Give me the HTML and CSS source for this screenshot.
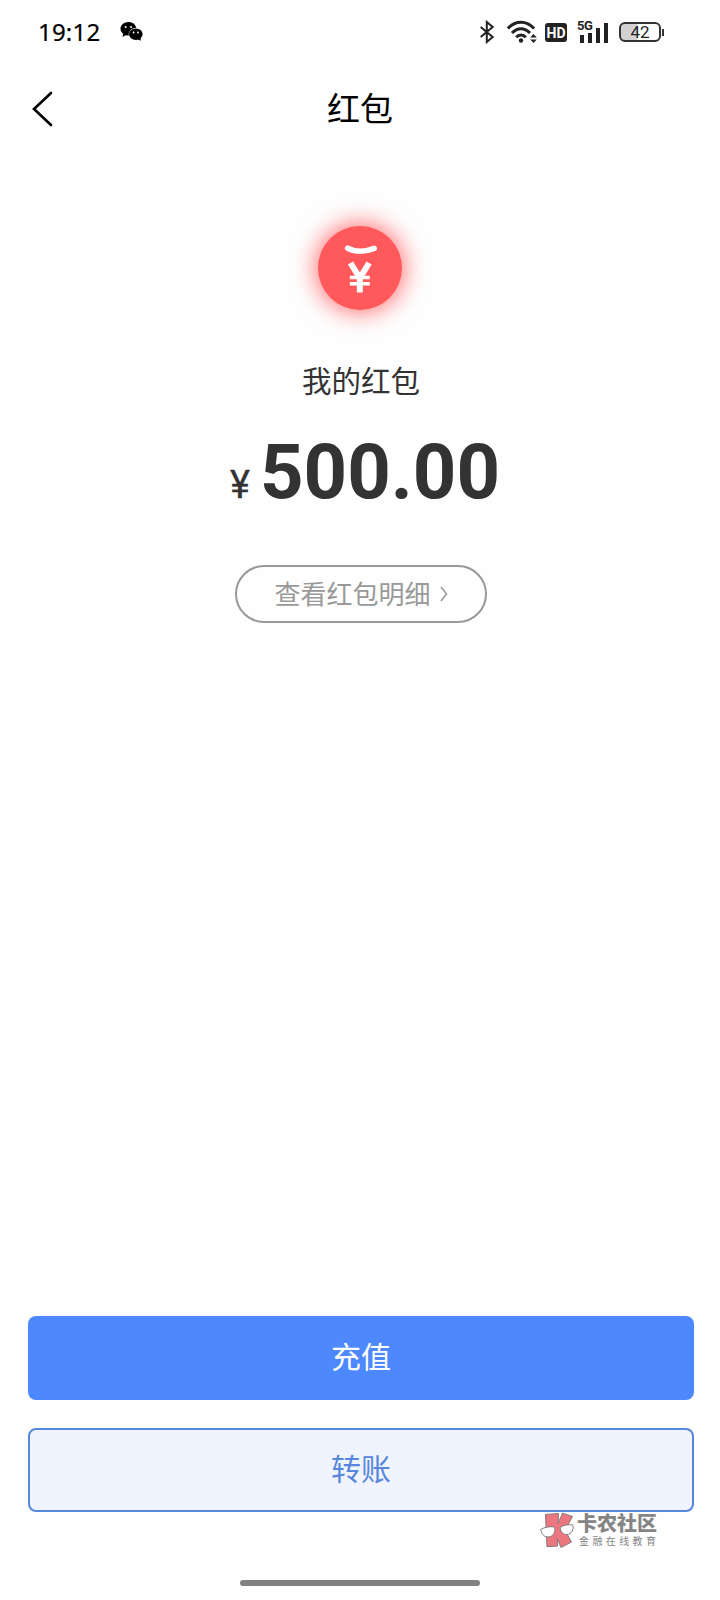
FILE: index.html
```
<!DOCTYPE html>
<html lang="zh-CN">
<head>
  <meta charset="UTF-8">
  <title>红包</title>
  <link rel="stylesheet" href="styles.css">
</head>
<body>

<div class="page">

  <!--状态栏-->
  <div class="status">
    <span class="time">19:12</span>
    <svg class="wechat" width="24" height="22" viewBox="0 0 24 22">
      <path d="M8.500 1C3.800 1 .5 4 .5 7.800c0 2.100 1 3.800 2.700 5L2.500 16l3.200-1.700 3 .4C8.300 10 11.500 7 16.300 6.800 15.500 3.300 12.500 1 8.500 1z"/>
      <ellipse cx="15.800" cy="13.200" rx="6.800" ry="5.800"/>
      <path d="M17 18l4 1.800-.8-3.500z"/>
      <g fill="#fff">
        <circle cx="5.700" cy="6" r="1"/><circle cx="11" cy="6" r="1"/>
        <circle cx="13.600" cy="11.500" r=".9"/><circle cx="18" cy="11.500" r=".9"/>
      </g>
    </svg>
    <div class="icons">
      <svg class="bluetooth" width="16" height="24" viewBox="0 0 16 24">
        <path d="M1.700 7l12 10-5.900 5V2l5.900 5-12 10" fill="none" stroke="#222" stroke-width="2"/>
      </svg>
      <svg class="wifi" width="31" height="24" viewBox="0 0 31 24">
        <g fill="none" stroke="#222" stroke-width="3">
          <path d="M.9 8.500C8.500.3 19.500.3 27.100 8.500"/>
          <path d="M5 13c5.300-5.800 12.700-5.800 18 0"/>
          <path d="M9.200 17.200c2.800-3.100 6.800-3.100 9.600 0"/>
        </g>
        <circle cx="14" cy="20.500" r="2.200"/>
        <path d="M23.200 17.500l3.300-3.500 3.300 3.500zM23.200 19.500h6.600L26.500 23z"/>
      </svg>
      <span class="hd">HD</span>
      <div class="signal">
        <span class="net">5G</span>
        <i class="bar b1"></i>
        <i class="bar b2"></i>
        <i class="bar b3"></i>
        <i class="bar b4"></i>
      </div>
      <div class="battery"><span>42</span></div>
      <i class="cap"></i>
    </div>
  </div>

  <!--标题栏-->
  <div class="nav">
    <a class="back" href="#">
      <svg width="22" height="36" viewBox="0 0 22 36">
        <path d="M19 2L2 18l17 16" fill="none" stroke="#000" stroke-width="2.600" stroke-linecap="round"/>
      </svg>
    </a>
    <h1>红包</h1>
  </div>

  <!--红包余额-->
  <div class="main">
    <div class="coin">
      <svg width="84" height="84" viewBox="0 0 84 84">
        <path d="M29.700 22.300q11.500 6 26.500 0" fill="none" stroke="#fff" stroke-width="5.600" stroke-linecap="round"/>
        <path d="M32.500 37l9.300 15 9.300-15M41.800 50v16.500" fill="none" stroke="#fff" stroke-width="6"/>
        <path d="M31.800 51.500h20M31.800 57.800h20" fill="none" stroke="#fff" stroke-width="3.400"/>
      </svg>
    </div>
    <p class="label">我的红包</p>
    <p class="amount"><span class="yen">¥</span>500.00</p>
    <a class="detail" href="#">
      <span>查看红包明细</span>
      <svg width="8" height="16" viewBox="0 0 8 16">
        <path d="M1 1l5.500 7L1 15" fill="none" stroke="#999" stroke-width="1.600"/>
      </svg>
    </a>
  </div>

  <!--底部按钮-->
  <div class="btns">
    <a class="btn recharge" href="#">充值</a>
    <a class="btn transfer" href="#">转账</a>
  </div>

  <div class="home"></div>

  <!--右下角水印-->
  <div class="mark">
    <svg width="34" height="36" viewBox="0 0 34 36">
      <path d="M5.500 2.500L18.500 1.500l-.5 10L22.500 1.200l10 3.300-7.500 14 6.500 11.500L21 35.500l-3.800-9 .3 7.500-10.500.7z" fill="#ed7780" stroke="#85777a"/>
      <g fill="#fff" stroke="#85777a">
        <path d="M.7 17.500c4-2.500 9-3.200 14-2.500 1 5.500-1.500 9.300-5.700 9.900C4.500 25.500 1.500 22.500.7 17.500z"/>
        <path d="M20 15.500c3.500-2.500 8-3.300 12.800-2.500 1.300 5-1.500 9-5.600 9.500-4 .5-6.500-2.700-7.200-7z"/>
      </g>
    </svg>
    <div class="words">
      <b>卡农社区</b>
      <span>金融在线教育</span>
    </div>
  </div>

</div>

</body>
</html>
```
FILE: styles.css
```
* {
  margin: 0;
  padding: 0;
  box-sizing: border-box;
}

body {
  background-color: #fefefe;
  font-family: "Noto Sans CJK SC", sans-serif;
  color: #333;
}

a {
  text-decoration: none;
}

svg {
  display: block;
}

.page {
  position: relative;
  width: 720px;
  height: 1600px;
  display: flex;
  flex-direction: column;
  overflow: hidden;
}

/*状态栏*/
.status {
  height: 64px;
  padding: 0 56px 0 38px;
  display: flex;
  align-items: center;
  color: #000;
}

.time {
  width: 82px;
  font: 400 24px/32px "Noto Sans", sans-serif;
  letter-spacing: .2px;
  -webkit-text-stroke: .2px #000;
}

.icons {
  margin-left: auto;
  display: flex;
  align-items: center;
  fill: #222;
}

.wifi {
  margin: 0 7px 0 12px;
}

.hd {
  width: 22px;
  height: 19px;
  margin-right: 11px;
  border-radius: 3px;
  background-color: #222;
  color: #fff;
  font: bold 14px/20px Roboto, sans-serif;
  text-align: center;
}

/*信号格*/
.signal {
  position: relative;
  width: 31px;
  height: 22px;
  margin-right: 10px;
  display: flex;
  align-items: flex-end;
  gap: 4px;
  padding-left: 2px;
}

.net {
  position: absolute;
  left: -1px;
  top: -2px;
  font: bold 13px/13px Roboto, sans-serif;
  letter-spacing: -.5px;
  color: #222;
}

.bar {
  width: 4px;
  background-color: #222;
}

.b1 {
  height: 8px;
}

.b2 {
  height: 10px;
}

.b3 {
  height: 15px;
}

.b4 {
  height: 20px;
}

.battery {
  width: 42px;
  height: 20px;
  border: 2px solid #333;
  border-radius: 6px;
  background: linear-gradient(to right, #d2d2d2 16px, #fff 16px);
  background-origin: content-box;
  font: 400 17px/17px Roboto, sans-serif;
  text-align: center;
  color: #222;
}

.cap {
  width: 2px;
  height: 7px;
  margin-left: 1px;
  background-color: #333;
}

/*标题栏*/
.nav {
  height: 90px;
  display: grid;
  grid-template-columns: 80px 1fr 80px;
  align-items: center;
}

.back {
  padding-left: 32px;
}

.nav h1 {
  padding-bottom: 4px;
  font-size: 33px;
  line-height: 48px;
  font-weight: 400;
  text-align: center;
  color: #000;
}

/*余额*/
.main {
  flex: 1;
  display: flex;
  flex-direction: column;
  align-items: center;
  padding: 72px 0 0 2px;
}

.coin {
  width: 84px;
  height: 84px;
  margin-right: 2px;
  border-radius: 50%;
  background-color: #ff595c;
  box-shadow: 0 0 24px 2px #ff6a6e;
}

.label {
  margin-top: 47px;
  font-size: 29.500px;
  line-height: 44px;
}

.amount {
  height: 90px;
  margin-top: 26px;
  padding-left: 8px;
  font: bold 76px/90px Roboto, sans-serif;
}

.yen {
  margin-right: 10px;
  font-size: 38px;
  font-weight: 400;
  -webkit-text-stroke: .3px #333;
}

.detail {
  width: 252px;
  height: 58px;
  margin-top: 48px;
  border: 2px solid #999;
  border-radius: 29px;
  display: flex;
  align-items: center;
  justify-content: center;
  gap: 9px;
  font-size: 26px;
  color: #999;
}

.detail span {
  padding-bottom: 4px;
}

/*底部按钮*/
.btns {
  display: flex;
  flex-direction: column;
  gap: 28px;
  padding: 0 26px 0 28px;
}

.btn {
  height: 84px;
  border-radius: 8px;
  font-size: 30px;
  line-height: 78px;
  text-align: center;
}

.recharge {
  background-color: #4d88ff;
  color: #fff;
}

.transfer {
  border: 2px solid #5786dc;
  background-color: #eff4ff;
  line-height: 74px;
  color: #5786dc;
}

.home {
  width: 240px;
  height: 6px;
  margin: 68px auto 14px;
  border-radius: 3px;
  background-color: #808080;
}

/*水印*/
.mark {
  position: absolute;
  left: 540px;
  top: 1512px;
  display: flex;
  gap: 3px;
}

.words {
  display: flex;
  flex-direction: column;
  color: #858585;
}

.words b {
  font-size: 20px;
  line-height: 22px;
  font-weight: 900;
}

.words span {
  padding-left: 2px;
  font-size: 10px;
  line-height: 14px;
  letter-spacing: 3.400px;
}
```
